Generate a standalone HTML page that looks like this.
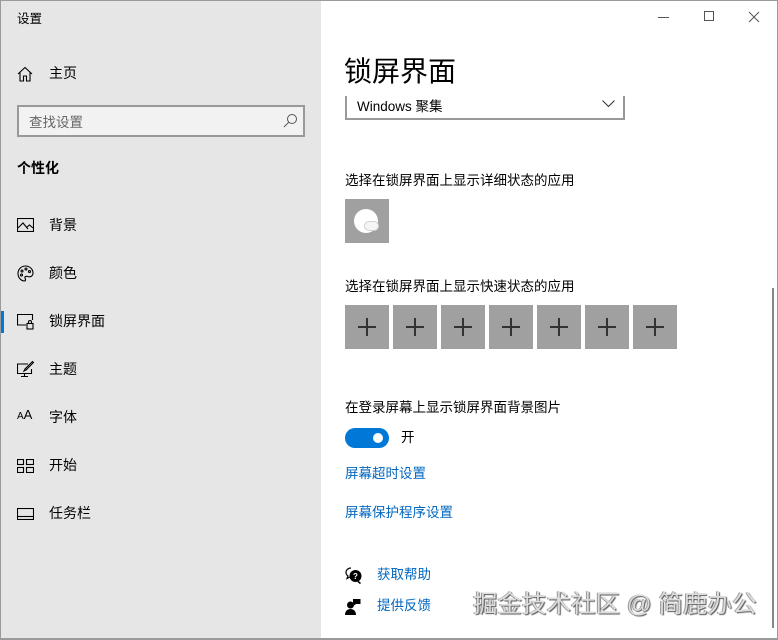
<!DOCTYPE html>
<html><head><meta charset="utf-8"><style>
*{margin:0;padding:0;box-sizing:border-box}
body{width:778px;height:640px;position:relative;overflow:hidden;background:#fff;font-family:"Liberation Sans","Noto Sans CJK SC",sans-serif;color:#000}
.a{position:absolute;white-space:nowrap}
#side{position:absolute;left:0;top:0;width:321px;height:640px;background:#e6e6e6}
.nav{position:absolute;left:49px;font-size:14px;line-height:16px}
.ic{position:absolute;left:17px}
.t{font-size:13.5px;line-height:16px}
.tile{position:absolute;width:44px;height:44px;background:#a0a0a0}
.tile:before{content:"";position:absolute;left:13px;top:21px;width:18px;height:2px;background:#333}
.tile:after{content:"";position:absolute;left:21px;top:13px;width:2px;height:18px;background:#333}
.lk{color:#0067c0;font-size:13.5px;line-height:16px}
</style></head><body>
<div id="side"></div>
<div class="a" style="left:0;top:0;width:778px;height:640px;border:1px solid #9a9a9a;border-bottom-width:2px"></div>
<div class="a" style="left:17px;top:8px;font-size:12.5px">设置</div>
<svg class="ic" style="top:66px" width="16" height="16" viewBox="0 0 16 16" fill="none" stroke="#000" stroke-width="1.1"><path d="M1 8L8 1.5 15 8M3 6.5V15H6.5V10H9.5V15H13V6.5"/></svg>
<div class="nav" style="top:65px">主页</div>
<div class="a" style="left:17px;top:105px;width:288px;height:32px;border:2px solid #999;background:#f2f2f2"></div>
<div class="a" style="left:29px;top:111px;font-size:13.5px;color:#666">查找设置</div>
<svg class="a" style="left:283px;top:113px" width="15" height="15" viewBox="0 0 15 15" fill="none" stroke="#555" stroke-width="1"><circle cx="9" cy="6" r="4.5"/><path d="M5.8 9.2L1 14"/></svg>
<div class="a" style="left:17px;top:158px;font-size:14px;font-weight:bold">个性化</div>

<svg class="ic" style="top:218px" width="17" height="14" viewBox="0 0 17 14" fill="none" stroke="#000" stroke-width="1.1"><rect x="0.5" y="0.5" width="16" height="13"/><path d="M1 10L6 5 11 11M10 9L12.5 7 16 10"/></svg>
<div class="nav" style="top:217px">背景</div>
<svg class="ic" style="top:265px" width="17" height="17" viewBox="0 0 17 17" fill="none" stroke="#000" stroke-width="1.1"><path d="M8.5 1C4 1 1 4.5 1 8.5 1 12.5 4 16 7.5 16 9 16 8.5 14 8 13 7.5 11.5 9 11 10.5 11.5 13.5 12.5 16 11 16 8 16 4 12.5 1 8.5 1Z"/><circle cx="5" cy="6" r="1"/><circle cx="9" cy="4" r="1"/><circle cx="12.5" cy="6.5" r="1"/><circle cx="4.5" cy="10" r="1"/></svg>
<div class="nav" style="top:265px">颜色</div>
<div class="a" style="left:1px;top:311px;width:3px;height:22px;background:#0078d7"></div>
<svg class="ic" style="top:314px" width="17" height="16" viewBox="0 0 17 16" fill="none" stroke="#000" stroke-width="1.1"><path d="M9 11H0.5V0.5H15.5V6"/><rect x="10" y="9.5" width="6" height="5.5"/><path d="M11.5 9.5V8A1.5 1.5 0 0 1 14.5 8V9.5"/></svg>
<div class="nav" style="top:313px">锁屏界面</div>
<svg class="ic" style="top:361px" width="17" height="17" viewBox="0 0 17 17" fill="none" stroke="#000" stroke-width="1.1"><path d="M11 3H0.5V12.5H14.5V8M7.5 12.5V15.5M4 15.5H11"/><path d="M15.5 0.5L8 8 7 10 9 9 16.5 1.5Z"/></svg>
<div class="nav" style="top:361px">主题</div>
<div class="ic a" style="top:410px;font-size:10px;line-height:10px">A<span style="font-size:13px">A</span></div>
<div class="nav" style="top:409px">字体</div>
<svg class="ic" style="top:459px" width="17" height="14" viewBox="0 0 17 14" fill="none" stroke="#000" stroke-width="1.1"><rect x="0.5" y="0.5" width="6" height="5"/><rect x="9.5" y="0.5" width="7" height="5"/><rect x="0.5" y="8.5" width="6" height="5"/><rect x="9.5" y="8.5" width="7" height="5"/></svg>
<div class="nav" style="top:457px">开始</div>
<svg class="ic" style="top:508px" width="17" height="12" viewBox="0 0 17 12" fill="none" stroke="#000" stroke-width="1.1"><rect x="0.5" y="0.5" width="16" height="11"/><path d="M1 8.5H16"/></svg>
<div class="nav" style="top:505px">任务栏</div>

<svg class="a" style="left:658px;top:10px" width="110" height="14" fill="none" stroke="#555" stroke-width="1"><path d="M0 7.5H11"/><rect x="46.5" y="1.5" width="9" height="9"/><path d="M91 2L101 12M101 2L91 12"/></svg>
<div class="a" style="left:344px;top:55px;font-size:28px;line-height:34px">锁屏界面</div>
<div class="a" style="left:345px;top:96px;width:280px;height:24px;border:2px solid #999;border-top:none"></div>
<div class="a" style="left:357px;top:95px;font-size:13.5px">Windows 聚集</div>
<svg class="a" style="left:602px;top:100px" width="13" height="8" fill="none" stroke="#333" stroke-width="1"><path d="M0.5 0.5L6.5 6.5 12.5 0.5"/></svg>

<div class="a t" style="left:345px;top:173px">选择在锁屏界面上显示详细状态的应用</div>
<div class="a" style="left:345px;top:199px;width:44px;height:44px;background:#a0a0a0"></div>
<div class="a" style="left:354px;top:209px;width:24px;height:24px;border-radius:50%;background:#fff"></div>
<div class="a" style="left:364px;top:221px;width:15px;height:10px;border:1.5px solid #d0d0d0;border-radius:6px;background:#f5f5f5"></div>

<div class="a t" style="left:345px;top:279px">选择在锁屏界面上显示快速状态的应用</div>
<div class="tile" style="left:345px;top:305px"></div>
<div class="tile" style="left:393px;top:305px"></div>
<div class="tile" style="left:441px;top:305px"></div>
<div class="tile" style="left:489px;top:305px"></div>
<div class="tile" style="left:537px;top:305px"></div>
<div class="tile" style="left:585px;top:305px"></div>
<div class="tile" style="left:633px;top:305px"></div>

<div class="a t" style="left:345px;top:400px">在登录屏幕上显示锁屏界面背景图片</div>
<div class="a" style="left:345px;top:428px;width:44px;height:20px;border-radius:10px;background:#0078d7"></div>
<div class="a" style="left:373px;top:433px;width:10px;height:10px;border-radius:50%;background:#fff"></div>
<div class="a t" style="left:401px;top:430px">开</div>
<div class="a lk" style="left:345px;top:466px">屏幕超时设置</div>
<div class="a lk" style="left:345px;top:505px">屏幕保护程序设置</div>

<svg class="a" style="left:345px;top:567px" width="17" height="17" viewBox="0 0 17 17"><path d="M6 1C3 1 1 3 1 5.5 1 7 1.8 8.2 3 9L2 11.5 5 10" fill="none" stroke="#000" stroke-width="1.2"/><circle cx="10.5" cy="9" r="6" fill="#000"/><path d="M13 14.5L15.5 16.5" stroke="#000" stroke-width="1.5"/><text x="10.5" y="12" font-size="8" font-weight="bold" fill="#fff" text-anchor="middle" font-family="Liberation Sans">?</text></svg>
<div class="a lk" style="left:377px;top:567px">获取帮助</div>
<svg class="a" style="left:345px;top:598px" width="16" height="17" viewBox="0 0 16 17" fill="#000"><circle cx="5.5" cy="7" r="3.5"/><path d="M0 17C0 13 2.5 11 5.5 11 8.5 11 11 13 11 17Z"/><path d="M8 1H15.5V6H11L9 7.5V6H8Z"/></svg>
<div class="a lk" style="left:377px;top:598px">提供反馈</div>
<div class="a" style="left:473px;top:591px;font-size:24.5px;line-height:28px;color:#dcdcdc;text-shadow:1px 1px 1px #555,-1px 0 0 #999">掘金技术社区 @ 简鹿办公</div>
<div class="a" style="left:772px;top:288px;width:2px;height:340px;background:#888"></div>
</body></html>
